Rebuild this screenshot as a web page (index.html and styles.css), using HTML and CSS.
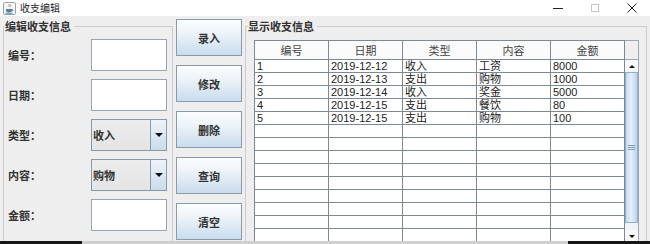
FILE: index.html
```html
<!DOCTYPE html>
<html lang="zh">
<head>
<meta charset="utf-8">
<title>收支编辑</title>
<link rel="stylesheet" href="styles.css">
</head>
<body>
<div class="titlebar">
  <svg class="app-icon" width="13" height="13" viewBox="0 0 13 13">
    <rect x="0.5" y="0.5" width="12" height="12" rx="1" fill="#f3f5f7" stroke="#8ea2b4"/>
    <path d="M6 2.2c1.2 0.9-0.9 1.6 0.2 2.7M7.6 2.6c0.8 0.7-0.6 1.2 0.1 1.9" stroke="#e76f00" stroke-width="0.9" fill="none"/>
    <path d="M3 7h6v1.6c0 1.3-1 2-3 2s-3-0.7-3-2z" fill="#5382a1"/>
    <path d="M9 7.4c1.4 0 1.4 1.6 0 1.6" stroke="#5382a1" stroke-width="0.8" fill="none"/>
    <rect x="2.5" y="10.8" width="7" height="0.9" fill="#5382a1"/>
  </svg>
  <span class="title">收支编辑</span>
  <div class="controls">
    <div class="ctl"><svg width="10" height="10" viewBox="0 0 10 10"><line x1="0" y1="5.5" x2="10" y2="5.5" stroke="#222" stroke-width="1"/></svg></div>
    <div class="ctl"><svg width="10" height="10" viewBox="0 0 10 10"><rect x="1.5" y="1.5" width="7" height="7" fill="none" stroke="#c4c4c4" stroke-width="1"/></svg></div>
    <div class="ctl"><svg width="10" height="10" viewBox="0 0 10 10"><path d="M0.5 0.5L9.5 9.5M9.5 0.5L0.5 9.5" stroke="#222" stroke-width="1"/></svg></div>
  </div>
</div>
<div class="main">
  <fieldset class="group edit">
    <legend>编辑收支信息</legend>
    <div class="form">
      <label>编号：</label><div class="field"></div>
      <label>日期：</label><div class="field"></div>
      <label>类型：</label><div class="combo"><span class="combo-text">收入</span><span class="combo-btn"><i class="down"></i></span></div>
      <label>内容：</label><div class="combo"><span class="combo-text">购物</span><span class="combo-btn"><i class="down"></i></span></div>
      <label>金额：</label><div class="field"></div>
    </div>
  </fieldset>
  <div class="buttons">
    <button class="btn">录入</button>
    <button class="btn">修改</button>
    <button class="btn">删除</button>
    <button class="btn">查询</button>
    <button class="btn">清空</button>
  </div>
  <fieldset class="group show">
    <legend>显示收支信息</legend>
    <div class="scrollpane">
      <div class="grid">
        <div class="th">编号</div><div class="th">日期</div><div class="th">类型</div><div class="th">内容</div><div class="th">金额</div>
        <div class="td">1</div><div class="td">2019-12-12</div><div class="td">收入</div><div class="td">工资</div><div class="td">8000</div>
        <div class="td">2</div><div class="td">2019-12-13</div><div class="td">支出</div><div class="td">购物</div><div class="td">1000</div>
        <div class="td">3</div><div class="td">2019-12-14</div><div class="td">收入</div><div class="td">奖金</div><div class="td">5000</div>
        <div class="td">4</div><div class="td">2019-12-15</div><div class="td">支出</div><div class="td">餐饮</div><div class="td">80</div>
        <div class="td">5</div><div class="td">2019-12-15</div><div class="td">支出</div><div class="td">购物</div><div class="td">100</div>
        <div class="td"></div><div class="td"></div><div class="td"></div><div class="td"></div><div class="td"></div>
        <div class="td"></div><div class="td"></div><div class="td"></div><div class="td"></div><div class="td"></div>
        <div class="td"></div><div class="td"></div><div class="td"></div><div class="td"></div><div class="td"></div>
        <div class="td"></div><div class="td"></div><div class="td"></div><div class="td"></div><div class="td"></div>
        <div class="td"></div><div class="td"></div><div class="td"></div><div class="td"></div><div class="td"></div>
        <div class="td"></div><div class="td"></div><div class="td"></div><div class="td"></div><div class="td"></div>
        <div class="td"></div><div class="td"></div><div class="td"></div><div class="td"></div><div class="td"></div>
        <div class="td"></div><div class="td"></div><div class="td"></div><div class="td"></div><div class="td"></div>
        <div class="td"></div><div class="td"></div><div class="td"></div><div class="td"></div><div class="td"></div>
      </div>
      <div class="vscroll">
        <div class="corner"></div>
        <div class="sb-btn"><i class="up"></i></div>
        <div class="thumb"><i class="grip"></i></div>
        <div class="track"></div>
        <div class="sb-btn"><i class="dn"></i></div>
      </div>
    </div>
  </fieldset>
</div>
<div class="taskbar"></div>
</body>
</html>
```
FILE: styles.css
```css
* { box-sizing: border-box; }
html, body { margin: 0; padding: 0; }
body {
  width: 650px;
  height: 244px;
  overflow: hidden;
  background: #eeeeee;
  font-family: "Liberation Sans", "Noto Sans CJK SC", sans-serif;
  color: #333;
}
.titlebar {
  height: 16px;
  background: #ffffff;
  display: flex;
  align-items: center;
}
.app-icon { margin-left: 3px; display: block; }
.title {
  margin-left: 4px;
  font-family: "Noto Sans CJK SC", sans-serif;
  font-size: 10px;
  line-height: 16px;
  color: #222;
}
.controls { margin-left: auto; display: flex; height: 16px; }
.ctl { width: 37px; display: flex; align-items: center; justify-content: center; }
.ctl svg { display: block; }

.main {
  display: flex;
  align-items: flex-start;
  height: 225px;
  overflow: hidden;
  padding-left: 3px;
}
.group {
  margin: 3px 0 0 0;
  padding: 0;
  border: 1px solid #cdcdcd;
  min-width: 0;
  height: 260px;
}
.group legend {
  font-family: "Noto Sans CJK SC", sans-serif;
  font-weight: bold;
  font-size: 11px;
  line-height: 14px;
  color: #333;
  padding: 0 3px 0 1px;
}
.edit { width: 170px; }
.form {
  display: grid;
  grid-template-columns: 87px 76px;
  grid-auto-rows: 32px;
  row-gap: 8px;
  padding-top: 6px;
}
.form label {
  font-family: "Noto Sans CJK SC", sans-serif;
  font-weight: bold;
  font-size: 11px;
  padding-left: 4px;
  display: flex;
  align-items: center;
  color: #333;
}
.field {
  background: #ffffff;
  border: 1px solid #98a6b4;
}
.combo {
  display: flex;
  border: 1px solid #8799aa;
  background: linear-gradient(#ececec, #e4e4e4);
}
.combo-text {
  flex: 1;
  padding-left: 1px;
  display: flex;
  align-items: center;
  font-family: "Noto Sans CJK SC", sans-serif;
  font-weight: bold;
  font-size: 11px;
  color: #333;
}
.combo-btn {
  width: 16px;
  border-left: 1px solid #8799aa;
  background: linear-gradient(#eef4fa, #c9dcec);
  display: flex;
  align-items: center;
  justify-content: center;
}
.down {
  display: block;
  width: 0; height: 0;
  border-left: 4px solid transparent;
  border-right: 4px solid transparent;
  border-top: 4px solid #111;
}
.buttons {
  margin: 3px 0 0 3px;
  width: 66px;
  display: flex;
  flex-direction: column;
  gap: 9px;
}
.btn {
  height: 37px;
  width: 66px;
  margin: 0;
  padding: 0;
  border: 1px solid #8a9aab;
  background: linear-gradient(#fbfdfe 0%, #eef4f9 35%, #c9dced 100%);
  font-family: "Noto Sans CJK SC", sans-serif;
  font-weight: bold;
  font-size: 11px;
  color: #333;
}
.show { margin-left: 3px; width: 402px; padding-left: 2px; }
.show legend { padding: 0 3px 0 0; }
.scrollpane {
  margin: 7px 0 0 6px;
  display: flex;
  height: 202px;
  overflow: hidden;
}
.grid {
  display: grid;
  grid-template-columns: repeat(5, 73px);
  grid-template-rows: 18px;
  grid-auto-rows: 12px;
  gap: 1px;
  background: #7a8a99;
  border: 1px solid #7a8a99;
  width: 371px;
  align-self: flex-start;
}
.th {
  background: #fbfbfb;
  text-align: center;
  font-family: "Noto Sans CJK SC", sans-serif;
  font-size: 11px;
  line-height: 18px;
  color: #444;
}
.td {
  background: #ffffff;
  font-size: 11px;
  line-height: 12px;
  padding-left: 2px;
  color: #222;
  white-space: nowrap;
  overflow: hidden;
}
.vscroll {
  width: 14px;
  border-top: 1px solid #9aa6b2;
  border-right: 1px solid #9aa6b2;
  display: flex;
  flex-direction: column;
  height: 202px;
  background: #f4f7fa;
}
.corner {
  height: 19px;
  background: #efefef;
  border-bottom: 1px solid #9aa6b2;
  flex: none;
}
.sb-btn {
  height: 12px;
  flex: none;
  display: flex;
  align-items: center;
  justify-content: center;
  background: #f7f9fb;
}
.up {
  display: block; width: 0; height: 0;
  border-left: 3px solid transparent;
  border-right: 3px solid transparent;
  border-bottom: 3px solid #111;
}
.dn {
  display: block; width: 0; height: 0;
  border-left: 3px solid transparent;
  border-right: 3px solid transparent;
  border-top: 3px solid #111;
}
.thumb {
  height: 151px;
  flex: none;
  border: 1px solid #8fb0cf;
  background: linear-gradient(to right, #c6daee, #e6f0f9 45%, #bcd3ea);
  display: flex;
  align-items: center;
  justify-content: center;
}
.grip {
  display: block;
  width: 7px;
  height: 5px;
  border-top: 1px solid #7f9db9;
  border-bottom: 1px solid #7f9db9;
  position: relative;
}
.grip::after {
  content: "";
  position: absolute;
  left: 0; right: 0; top: 1px;
  border-top: 1px solid #7f9db9;
}
.track { flex: 1; background: #eef3f8; }
.taskbar {
  height: 3px;
  background: linear-gradient(to right, #161616 0 82px, #cfcfcf 82px 568px, #161616 568px);
}
```
